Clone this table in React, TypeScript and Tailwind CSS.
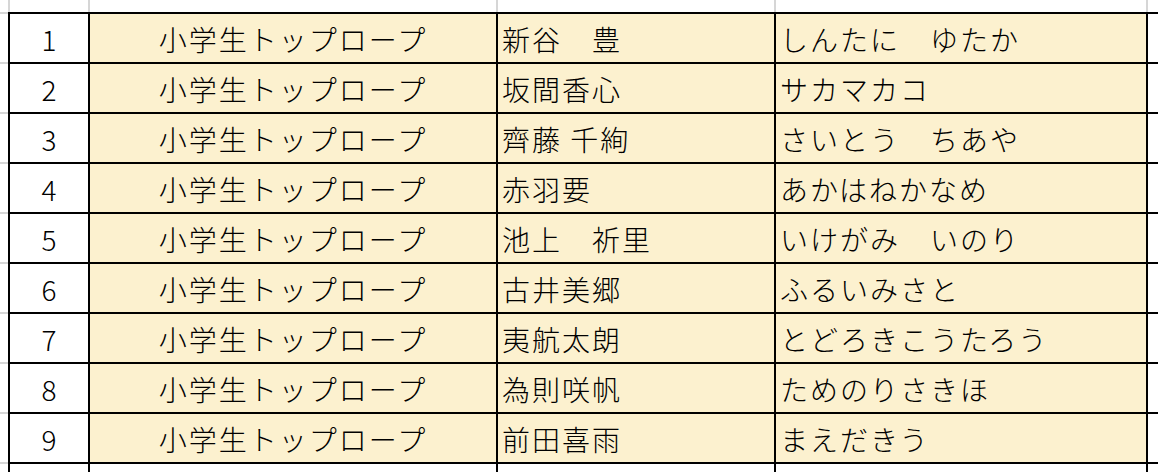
const rows = [
  ["1", "新谷　豊", "しんたに　ゆたか"],
  ["2", "坂間香心", "サカマカコ"],
  ["3", "齊藤 千絢", "さいとう　ちあや"],
  ["4", "赤羽要", "あかはねかなめ"],
  ["5", "池上　祈里", "いけがみ　いのり"],
  ["6", "古井美郷", "ふるいみさと"],
  ["7", "夷航太朗", "とどろきこうたろう"],
  ["8", "為則咲帆", "ためのりさきほ"],
  ["9", "前田喜雨", "まえだきう"],
];

const cell = "flex h-full items-center border-l-2 border-b-2 border-black pt-[2px]";

export default function App() {
  return (
    <div
      className="flex h-[472px] w-[1158px] flex-col overflow-hidden bg-white text-[28px] font-light leading-none text-black"
      style={{ fontFamily: '"Noto Sans CJK JP", "Noto Sans", sans-serif' }}
    >
      {/* gridlines above the table */}
      <div className="flex h-[12px] shrink-0">
        <div className="w-[8px]" />
        <div className="w-[80px] border-l-2 border-[#d6d6d6]" />
        <div className="w-[408px] border-l-2 border-[#d6d6d6]" />
        <div className="w-[278px] border-l-2 border-[#d6d6d6]" />
        <div className="w-[372px] border-l-2 border-[#d6d6d6]" />
        <div className="flex-1 border-l-2 border-[#d6d6d6]" />
      </div>
      <div className="flex h-[2px] shrink-0">
        <div className="w-[8px] bg-[#d6d6d6]" />
        <div className="flex-1 bg-black" />
      </div>

      {rows.map(([no, name, kana]) => (
        <div key={no} className="flex h-[50px] shrink-0">
          <div className="h-full w-[8px] border-b-2 border-[#d6d6d6]" />
          <div className={`${cell} w-[80px] justify-center bg-white`}>{no}</div>
          <div className={`${cell} w-[408px] justify-center bg-[#fcf1cf] tracking-[2px]`}>小学生トップロープ</div>
          <div className={`${cell} w-[278px] bg-[#fcf1cf] pl-[4px] tracking-[2px]`}>{name}</div>
          <div className={`${cell} w-[372px] bg-[#fcf1cf] pl-[4px] tracking-[2px]`}>{kana}</div>
          <div className={`${cell} flex-1 bg-white`} />
        </div>
      ))}

      <div className="flex flex-1">
        <div className="w-[8px]" />
        <div className="w-[80px] border-l-2 border-black" />
        <div className="w-[408px] border-l-2 border-black" />
        <div className="w-[278px] border-l-2 border-black" />
        <div className="w-[372px] border-l-2 border-black" />
        <div className="flex-1 border-l-2 border-black" />
      </div>
    </div>
  );
}
